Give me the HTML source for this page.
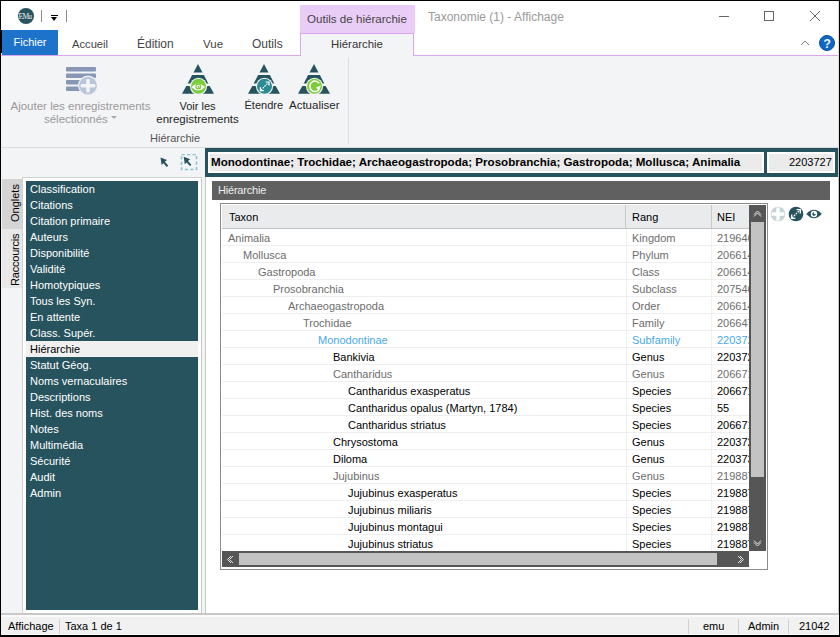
<!DOCTYPE html>
<html><head><meta charset="utf-8">
<style>
*{box-sizing:border-box;margin:0;padding:0}
html,body{width:840px;height:637px;overflow:hidden;background:#000}
body{position:relative;font-family:"Liberation Sans",sans-serif;font-size:11px;color:#000}
.a{position:absolute}
.t{position:absolute;white-space:nowrap;line-height:1}
.r{font-size:12px}
</style></head><body>
<div class="a" style="left:1px;top:1px;width:838px;height:634px;background:#f3f4f6"></div>
<div class="a" style="left:1px;top:1px;width:838px;height:54px;background:#fff"></div>
<div class="a" style="left:1px;top:55px;width:838px;height:1px;background:#d9a6ef"></div>
<div class="a" style="left:18px;top:8px;width:16px;height:16px;border-radius:50%;background:#27535e"></div>
<div class="t" style="left:18.5px;top:12.5px;font-family:'Liberation Serif',serif;font-size:7.5px;color:#e8eef0;letter-spacing:-0.7px;-webkit-font-smoothing:grayscale">EMu</div>
<div class="a" style="left:41px;top:10px;width:1px;height:12px;background:#8a8a8a"></div>
<div class="a" style="left:51px;top:15px;width:7px;height:1px;background:#000"></div>
<div class="a" style="left:51px;top:17px;width:0;height:0;border-left:3.5px solid transparent;border-right:3.5px solid transparent;border-top:4px solid #000"></div>
<div class="a" style="left:66px;top:10px;width:1px;height:12px;background:#8a8a8a"></div>
<div class="a" style="left:300px;top:5px;width:115px;height:28px;background:#eacdf7"></div>
<div class="t" style="left:307px;top:13px;font-size:11.6px;color:#444">Outils de hiérarchie</div>
<div class="a" style="left:300px;top:33px;width:114px;height:23px;background:#f3f4f6;border:1px solid #d9a6ef;border-bottom:none"></div>
<div class="t" style="left:331px;top:39px;font-size:11.4px;color:#333">Hiérarchie</div>
<div class="t" style="left:428px;top:11px;font-size:12px;color:#9a9a9a">Taxonomie (1) - Affichage</div>
<div class="a" style="left:719px;top:16px;width:10px;height:1px;background:#666"></div>
<div class="a" style="left:764px;top:11px;width:10px;height:10px;border:1px solid #666"></div>
<svg class="a" style="left:809px;top:10px" width="12" height="12"><path d="M1 1 L11 11 M11 1 L1 11" stroke="#666" stroke-width="1"/></svg>
<div class="a" style="left:2px;top:30px;width:56px;height:25px;background:#1d73c9"></div>
<div class="a" style="left:1px;top:30px;width:1px;height:23px;background:#000"></div>
<div class="t" style="left:13.5px;top:37px;font-size:11px;color:#fff">Fichier</div>
<div class="t" style="left:72px;top:39px;font-size:11.2px;color:#444">Accueil</div>
<div class="t" style="left:137px;top:38px;font-size:12px;color:#444">Édition</div>
<div class="t" style="left:203px;top:39px;font-size:11.5px;color:#444">Vue</div>
<div class="t" style="left:252px;top:38px;font-size:12px;color:#444">Outils</div>
<svg class="a" style="left:800px;top:39px" width="11" height="7"><path d="M1 6 L5 2 L9 6" stroke="#808080" fill="none" stroke-width="1"/></svg>
<div class="a" style="left:819px;top:35px;width:16px;height:16px;border-radius:50%;background:#1168c4;border:1px solid #0b4f98"></div>
<div class="t" style="left:823.5px;top:37.5px;font-size:12px;font-weight:bold;color:#f0f6ff">?</div>
<div class="a" style="left:1px;top:147px;width:838px;height:1px;background:#dadbdc"></div>
<div class="a" style="left:348px;top:58px;width:1px;height:86px;background:#dcdcdc"></div>
<svg class="a" style="left:0;top:0" width="840" height="148">
 <defs>
  <g id="tri">
   <path d="M0 -0.2 L4.5 8.2 L-4.5 8.2 Z" fill="#27535e"/>
   <path d="M-5.9 10.8 L5.9 10.8 L10.3 19.2 L-10.3 19.2 Z" fill="#27535e"/>
   <path d="M-11.7 21.7 L11.7 21.7 L16 29.5 L-16 29.5 Z" fill="#27535e"/>
   <circle cx="0.5" cy="22" r="8.6" fill="#f3f4f6"/>
  </g>
 </defs>
 <g fill="#8797b5">
  <rect x="66" y="67" width="30" height="4.5" rx="1"/>
  <rect x="66" y="73.5" width="30" height="4.5" rx="1"/>
  <rect x="66" y="80" width="16" height="4.5" rx="1"/>
  <rect x="66" y="86.5" width="16" height="4.5" rx="1"/>
 </g>
 <circle cx="88" cy="85.6" r="10" fill="#f3f4f6"/>
 <circle cx="88" cy="85.6" r="8.9" fill="#b9c5d9"/>
 <path d="M88 80.5 V91 M82.2 85.8 H93.8" stroke="#f3f4f6" stroke-width="3.6" stroke-linecap="round"/>
 <use href="#tri" x="198" y="64.3"/>
 <circle cx="198.5" cy="86.3" r="7.5" fill="#7acd38"/>
 <path d="M191.5 87 Q198.3 79.8 205.1 87 Q198.3 94.2 191.5 87 Z" fill="#fff"/>
 <circle cx="198.3" cy="86.5" r="3" fill="#7acd38"/>
 <circle cx="198.3" cy="86.5" r="1.8" fill="#fff"/>
 <circle cx="198.7" cy="86.9" r="1" fill="#7acd38"/>
 <use href="#tri" x="264" y="64.3"/>
 <circle cx="264.5" cy="86.3" r="7.5" fill="#2a8b93"/>
 <path d="M260.8 90.2 L268.6 82.4" stroke="#fff" stroke-width="1.2" stroke-dasharray="1.6 1"/>
 <path d="M265.6 82 H269 V85.4 M260.4 87.2 V90.6 H263.8" stroke="#fff" stroke-width="1.2" fill="none"/>
 <use href="#tri" x="314" y="64.3"/>
 <circle cx="314.5" cy="86.3" r="7.5" fill="#7acd38"/>
 <path d="M319.2 89.4 A5.2 5.2 0 1 1 319.3 83.4" stroke="#fff" stroke-width="1.5" fill="none"/>
 <path d="M321 85.5 L316.3 87.3 L318.6 91.5 Z" fill="#fff"/>
</svg>
<div class="t" style="left:10px;top:100px;font-size:11.5px;color:#9a9a9a;width:141px;text-align:center;line-height:12.5px">Ajouter les enregistrements<br>sélectionnés <span style="display:inline-block;width:0;height:0;border-left:3px solid transparent;border-right:3px solid transparent;border-top:3px solid #aaa;vertical-align:3.5px"></span></div>
<div class="t" style="left:156px;top:100px;font-size:11.5px;color:#262626;width:83px;text-align:center;line-height:12.5px"><span style="font-size:11px">Voir les</span><br>enregistrements</div>
<div class="t" style="left:244.5px;top:100px;font-size:11px;color:#262626">Étendre</div>
<div class="t" style="left:289px;top:100px;font-size:11.5px;color:#262626">Actualiser</div>
<div class="t" style="left:150px;top:133px;font-size:11px;color:#555">Hiérarchie</div>
<svg class="a" style="left:158px;top:154px" width="42" height="17">
 <path d="M2.5 3.5 L9 6 L6.8 7.8 L10.2 11.6 L8.8 12.9 L5.4 9.2 L3.6 11 Z" fill="#27535e"/>
 <rect x="23.5" y="0.5" width="15" height="15" fill="none" stroke="#8cc3c8" stroke-width="1.6" stroke-dasharray="3.2 2.3"/>
 <path d="M25.7 2.7 L32.2 5.2 L30 7 L33.4 10.8 L32 12.1 L28.6 8.4 L26.8 10.2 Z" fill="#27535e"/>
</svg>
<div class="a" style="left:2px;top:179px;width:20px;height:50px;background:#d4d4d4"></div>
<div class="a" style="left:2px;top:229px;width:20px;height:59px;background:#e8e8e8"></div>
<div class="t" style="left:10px;top:222px;transform-origin:0 0;transform:rotate(-90deg);line-height:10px">Onglets</div>
<div class="t" style="left:10px;top:286px;transform-origin:0 0;transform:rotate(-90deg);line-height:10px;letter-spacing:-0.2px">Raccourcis</div>
<div class="a" style="left:22px;top:177px;width:180px;height:438px;background:#fff;border:1px solid #d0d0d0;border-right:1px solid #c8c8c8"></div>
<div class="a" style="left:26px;top:181px;width:172px;height:429px;background:#27535e"></div>
<div class="t" style="left:30px;top:184px;color:#fff">Classification</div>
<div class="t" style="left:30px;top:200px;color:#fff">Citations</div>
<div class="t" style="left:30px;top:216px;color:#fff">Citation primaire</div>
<div class="t" style="left:30px;top:232px;color:#fff">Auteurs</div>
<div class="t" style="left:30px;top:248px;color:#fff">Disponibilité</div>
<div class="t" style="left:30px;top:264px;color:#fff">Validité</div>
<div class="t" style="left:30px;top:280px;color:#fff">Homotypiques</div>
<div class="t" style="left:30px;top:296px;color:#fff">Tous les Syn.</div>
<div class="t" style="left:30px;top:312px;color:#fff">En attente</div>
<div class="t" style="left:30px;top:328px;color:#fff">Class. Supér.</div>
<div class="a" style="left:26px;top:341px;width:172px;height:16px;background:#f0f0f0"></div>
<div class="t" style="left:30px;top:344px;color:#000">Hiérarchie</div>
<div class="t" style="left:30px;top:360px;color:#fff">Statut Géog.</div>
<div class="t" style="left:30px;top:376px;color:#fff">Noms vernaculaires</div>
<div class="t" style="left:30px;top:392px;color:#fff">Descriptions</div>
<div class="t" style="left:30px;top:408px;color:#fff">Hist. des noms</div>
<div class="t" style="left:30px;top:424px;color:#fff">Notes</div>
<div class="t" style="left:30px;top:440px;color:#fff">Multimédia</div>
<div class="t" style="left:30px;top:456px;color:#fff">Sécurité</div>
<div class="t" style="left:30px;top:472px;color:#fff">Audit</div>
<div class="t" style="left:30px;top:488px;color:#fff">Admin</div>
<div class="a" style="left:205px;top:177px;width:634px;height:438px;background:#fff;border-left:1px solid #c8c8c8"></div>
<div class="a" style="left:205px;top:148px;width:634px;height:29px;background:#27535e"></div>
<div class="a" style="left:208px;top:152px;width:556px;height:21px;background:#ebebeb;border:2px solid #fff"></div>
<div class="a" style="left:767px;top:152px;width:68px;height:21px;background:#ebebeb;border:2px solid #fff"></div>
<div class="t" style="left:211px;top:156px;font-weight:bold;font-size:11.6px">Monodontinae; Trochidae; Archaeogastropoda; Prosobranchia; Gastropoda; Mollusca; Animalia</div>
<div class="t" style="left:789px;top:157px;">2203727</div>
<div class="a" style="left:212px;top:181px;width:618px;height:19px;background:#606060"></div>
<div class="t" style="left:218px;top:185px;color:#eee;letter-spacing:-0.2px">Hiérarchie</div>
<div class="a" style="left:1px;top:613px;width:838px;height:2px;background:#c8c8c8"></div>
<div class="a" style="left:1px;top:615px;width:838px;height:2px;background:#fafafa"></div>
<div class="a" style="left:1px;top:634px;width:838px;height:1px;background:#f8f8f8"></div>
<div class="a" style="left:1px;top:617px;width:838px;height:17px;background:#f1f1f1"></div>
<div class="a" style="left:838px;top:148px;width:1px;height:467px;background:#c8c8c8"></div>
<div class="a" style="left:838px;top:1px;width:1px;height:147px;background:#dedede"></div>
<div class="t" style="left:8px;top:621px;">Affichage</div>
<div class="t" style="left:65px;top:621px;">Taxa 1 de 1</div>
<div class="t" style="left:703px;top:621px;">emu</div>
<div class="t" style="left:748px;top:621px;">Admin</div>
<div class="t" style="left:799px;top:621px;">21042</div>
<div class="a" style="left:59px;top:619px;width:1px;height:15px;background:#d0d0d0"></div>
<div class="a" style="left:688px;top:619px;width:1px;height:15px;background:#d0d0d0"></div>
<div class="a" style="left:738px;top:619px;width:1px;height:15px;background:#d0d0d0"></div>
<div class="a" style="left:788px;top:619px;width:1px;height:15px;background:#d0d0d0"></div>
<div class="a" style="left:220px;top:203px;width:548px;height:367px;border:1px solid #8c8c8c;background:#fff"></div>
<div class="a" style="left:222px;top:205px;width:527px;height:346px;overflow:hidden"><div class="a" style="left:-222px;top:-205px;width:840px;height:637px">
<div class="a" style="left:222px;top:205px;width:545px;height:23px;background:#e9ebed"></div>
<div class="a" style="left:222px;top:228px;width:545px;height:1px;background:#c0c0c0"></div>
<div class="a" style="left:625px;top:205px;width:1px;height:23px;background:#c8c8c8"></div>
<div class="a" style="left:711px;top:205px;width:1px;height:23px;background:#c8c8c8"></div>
<div class="a" style="left:626px;top:229px;width:1px;height:330px;background:#f0f0f0"></div>
<div class="a" style="left:711px;top:229px;width:1px;height:330px;background:#f0f0f0"></div>
<div class="t" style="left:229px;top:212px;">Taxon</div>
<div class="t" style="left:632px;top:212px;">Rang</div>
<div class="t" style="left:717px;top:212px;">NEI</div>
<div class="a" style="left:222px;top:245px;width:527px;height:1px;background:#efefef"></div>
<div class="t" style="left:228px;top:233px;color:#6d6d6d">Animalia</div>
<div class="t" style="left:632px;top:233px;color:#6d6d6d">Kingdom</div>
<div class="t" style="left:717px;top:233px;color:#6d6d6d">2196461</div>
<div class="a" style="left:222px;top:262px;width:527px;height:1px;background:#efefef"></div>
<div class="t" style="left:243px;top:250px;color:#6d6d6d">Mollusca</div>
<div class="t" style="left:632px;top:250px;color:#6d6d6d">Phylum</div>
<div class="t" style="left:717px;top:250px;color:#6d6d6d">2066141</div>
<div class="a" style="left:222px;top:279px;width:527px;height:1px;background:#efefef"></div>
<div class="t" style="left:258px;top:267px;color:#6d6d6d">Gastropoda</div>
<div class="t" style="left:632px;top:267px;color:#6d6d6d">Class</div>
<div class="t" style="left:717px;top:267px;color:#6d6d6d">2066142</div>
<div class="a" style="left:222px;top:296px;width:527px;height:1px;background:#efefef"></div>
<div class="t" style="left:273px;top:284px;color:#6d6d6d">Prosobranchia</div>
<div class="t" style="left:632px;top:284px;color:#6d6d6d">Subclass</div>
<div class="t" style="left:717px;top:284px;color:#6d6d6d">2075461</div>
<div class="a" style="left:222px;top:313px;width:527px;height:1px;background:#efefef"></div>
<div class="t" style="left:288px;top:301px;color:#6d6d6d">Archaeogastropoda</div>
<div class="t" style="left:632px;top:301px;color:#6d6d6d">Order</div>
<div class="t" style="left:717px;top:301px;color:#6d6d6d">2066143</div>
<div class="a" style="left:222px;top:330px;width:527px;height:1px;background:#efefef"></div>
<div class="t" style="left:303px;top:318px;color:#6d6d6d">Trochidae</div>
<div class="t" style="left:632px;top:318px;color:#6d6d6d">Family</div>
<div class="t" style="left:717px;top:318px;color:#6d6d6d">2066471</div>
<div class="a" style="left:222px;top:347px;width:527px;height:1px;background:#efefef"></div>
<div class="t" style="left:318px;top:335px;color:#4aa8e8">Monodontinae</div>
<div class="t" style="left:632px;top:335px;color:#4aa8e8">Subfamily</div>
<div class="t" style="left:717px;top:335px;color:#4aa8e8">2203727</div>
<div class="a" style="left:222px;top:364px;width:527px;height:1px;background:#efefef"></div>
<div class="t" style="left:333px;top:352px;color:#000">Bankivia</div>
<div class="t" style="left:632px;top:352px;color:#000">Genus</div>
<div class="t" style="left:717px;top:352px;color:#000">2203728</div>
<div class="a" style="left:222px;top:381px;width:527px;height:1px;background:#efefef"></div>
<div class="t" style="left:333px;top:369px;color:#6d6d6d">Cantharidus</div>
<div class="t" style="left:632px;top:369px;color:#6d6d6d">Genus</div>
<div class="t" style="left:717px;top:369px;color:#6d6d6d">2066711</div>
<div class="a" style="left:222px;top:398px;width:527px;height:1px;background:#efefef"></div>
<div class="t" style="left:348px;top:386px;color:#000">Cantharidus exasperatus</div>
<div class="t" style="left:632px;top:386px;color:#000">Species</div>
<div class="t" style="left:717px;top:386px;color:#000">2066712</div>
<div class="a" style="left:222px;top:415px;width:527px;height:1px;background:#efefef"></div>
<div class="t" style="left:348px;top:403px;color:#000">Cantharidus opalus (Martyn, 1784)</div>
<div class="t" style="left:632px;top:403px;color:#000">Species</div>
<div class="t" style="left:717px;top:403px;color:#000">55</div>
<div class="a" style="left:222px;top:432px;width:527px;height:1px;background:#efefef"></div>
<div class="t" style="left:348px;top:420px;color:#000">Cantharidus striatus</div>
<div class="t" style="left:632px;top:420px;color:#000">Species</div>
<div class="t" style="left:717px;top:420px;color:#000">2066713</div>
<div class="a" style="left:222px;top:449px;width:527px;height:1px;background:#efefef"></div>
<div class="t" style="left:333px;top:437px;color:#000">Chrysostoma</div>
<div class="t" style="left:632px;top:437px;color:#000">Genus</div>
<div class="t" style="left:717px;top:437px;color:#000">2203729</div>
<div class="a" style="left:222px;top:466px;width:527px;height:1px;background:#efefef"></div>
<div class="t" style="left:333px;top:454px;color:#000">Diloma</div>
<div class="t" style="left:632px;top:454px;color:#000">Genus</div>
<div class="t" style="left:717px;top:454px;color:#000">2203730</div>
<div class="a" style="left:222px;top:483px;width:527px;height:1px;background:#efefef"></div>
<div class="t" style="left:333px;top:471px;color:#6d6d6d">Jujubinus</div>
<div class="t" style="left:632px;top:471px;color:#6d6d6d">Genus</div>
<div class="t" style="left:717px;top:471px;color:#6d6d6d">2198871</div>
<div class="a" style="left:222px;top:500px;width:527px;height:1px;background:#efefef"></div>
<div class="t" style="left:348px;top:488px;color:#000">Jujubinus exasperatus</div>
<div class="t" style="left:632px;top:488px;color:#000">Species</div>
<div class="t" style="left:717px;top:488px;color:#000">2198872</div>
<div class="a" style="left:222px;top:517px;width:527px;height:1px;background:#efefef"></div>
<div class="t" style="left:348px;top:505px;color:#000">Jujubinus miliaris</div>
<div class="t" style="left:632px;top:505px;color:#000">Species</div>
<div class="t" style="left:717px;top:505px;color:#000">2198873</div>
<div class="a" style="left:222px;top:534px;width:527px;height:1px;background:#efefef"></div>
<div class="t" style="left:348px;top:522px;color:#000">Jujubinus montagui</div>
<div class="t" style="left:632px;top:522px;color:#000">Species</div>
<div class="t" style="left:717px;top:522px;color:#000">2198874</div>
<div class="a" style="left:222px;top:551px;width:527px;height:1px;background:#efefef"></div>
<div class="t" style="left:348px;top:539px;color:#000">Jujubinus striatus</div>
<div class="t" style="left:632px;top:539px;color:#000">Species</div>
<div class="t" style="left:717px;top:539px;color:#000">2198875</div>
</div></div>
<div class="a" style="left:749px;top:205px;width:17px;height:346px;background:#565656"></div>
<div class="a" style="left:751px;top:222px;width:13px;height:255px;background:#c3c3c3"></div>
<svg class="a" style="left:749px;top:205px" width="17" height="17"><path d="M5 9.5 L8.5 6 L12 9.5 M5 11.5 L8.5 8 L12 11.5" stroke="#e6e6e6" stroke-width="1" fill="none"/></svg>
<svg class="a" style="left:749px;top:534px" width="17" height="17"><path d="M5 6.5 L8.5 10 L12 6.5 M5 8.5 L8.5 12 L12 8.5" stroke="#e6e6e6" stroke-width="1" fill="none"/></svg>
<div class="a" style="left:222px;top:551px;width:527px;height:16px;background:#565656"></div>
<div class="a" style="left:239px;top:553px;width:478px;height:12px;background:#c3c3c3"></div>
<svg class="a" style="left:222px;top:551px" width="17" height="16"><path d="M9 5 L5.5 8.5 L9 12 M11 5 L7.5 8.5 L11 12" stroke="#e6e6e6" stroke-width="1" fill="none"/></svg>
<svg class="a" style="left:732px;top:551px" width="17" height="16"><path d="M8 5 L11.5 8.5 L8 12 M6 5 L9.5 8.5 L6 12" stroke="#e6e6e6" stroke-width="1" fill="none"/></svg>
<svg class="a" style="left:769px;top:205px" width="56" height="18">
 <circle cx="9" cy="9" r="7.3" fill="#c5d4d8"/>
 <path d="M9 2.6 V15.4 M2.6 9 H15.4" stroke="#fff" stroke-width="3.3"/>
 <circle cx="27" cy="9" r="7.3" fill="#27535e"/>
 <path d="M23.2 12.8 L30.8 5.2" stroke="#fff" stroke-width="1.3" stroke-dasharray="1.6 1"/>
 <path d="M27.6 4.7 H31.3 V8.4 M22.7 9.6 V13.3 H26.4" stroke="#fff" stroke-width="1.3" fill="none"/>
 <path d="M37.3 9 Q45 0.6 52.8 9 Q45 17.4 37.3 9 Z" fill="#27535e"/>
 <circle cx="45" cy="9" r="3.2" fill="#fff"/>
 <path d="M45 9.1 V7.3 A1.8 1.8 0 1 0 46.8 9.1 Z" fill="#27535e"/>
</svg>
</body></html>
